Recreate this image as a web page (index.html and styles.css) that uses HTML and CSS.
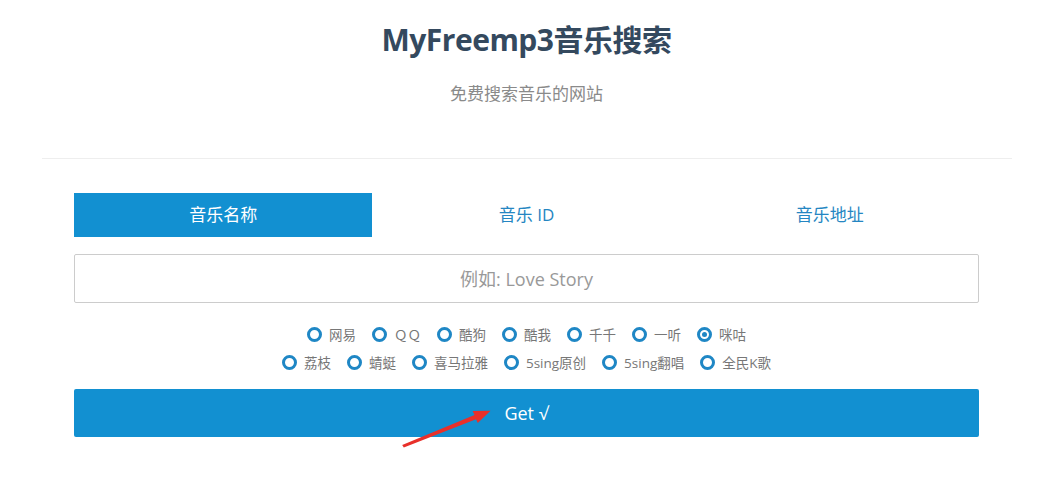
FILE: index.html
```html
<!DOCTYPE html>
<html lang="zh-CN">
<head>
<meta charset="utf-8">
<title>MyFreemp3音乐搜索</title>
<link rel="stylesheet" href="styles.css">
</head>
<body>
<div class="page">
  <header class="header">
    <h1 class="title">MyFreemp3音乐搜索</h1>
    <p class="subtitle">免费搜索音乐的网站</p>
  </header>
  <div class="divider"></div>
  <main class="form">
    <div class="tabs">
      <div class="tab active">音乐名称</div>
      <div class="tab">音乐 ID</div>
      <div class="tab">音乐地址</div>
    </div>
    <div class="search">
      <input class="search-input" type="text" placeholder="例如: Love Story">
    </div>
    <div class="sources">
      <div class="row">
        <label class="opt"><span class="radio"></span>网易</label>
        <label class="opt"><span class="radio"></span>ＱＱ</label>
        <label class="opt"><span class="radio"></span>酷狗</label>
        <label class="opt"><span class="radio"></span>酷我</label>
        <label class="opt"><span class="radio"></span>千千</label>
        <label class="opt"><span class="radio"></span>一听</label>
        <label class="opt"><span class="radio checked"></span>咪咕</label>
      </div>
      <div class="row">
        <label class="opt"><span class="radio"></span>荔枝</label>
        <label class="opt"><span class="radio"></span>蜻蜓</label>
        <label class="opt"><span class="radio"></span>喜马拉雅</label>
        <label class="opt"><span class="radio"></span>5sing原创</label>
        <label class="opt"><span class="radio"></span>5sing翻唱</label>
        <label class="opt"><span class="radio"></span>全民K歌</label>
      </div>
    </div>
    <div class="submit-wrap">
      <button class="submit" type="button">Get √</button>
      <svg class="arrow" width="100" height="50" viewBox="0 0 100 50">
        <polygon points="2.2,44.9 74.5,14.9 72.6,11 90.5,10.8 77.8,23 76,19.2 3.8,47.6" fill="#e8302a"/>
      </svg>
    </div>
  </main>
</div>
</body>
</html>
```
FILE: styles.css
```css
* { box-sizing: border-box; }
html, body { margin: 0; padding: 0; background: #fff; }
body {
  font-family: "Open Sans", "Noto Sans CJK SC", sans-serif;
  color: #333;
}
.page {
  width: 970px;
  margin: 0 auto;
  padding-bottom: 45px;
  position: relative;
  left: -2px;
}
.header { text-align: center; }
.title {
  margin: 23px 0 0;
  font-size: 30px;
  line-height: 34px;
  font-weight: 700;
  letter-spacing: -0.5px;
  color: #34495e;
}
.subtitle {
  margin: 24px 0 0;
  font-size: 17px;
  line-height: 26px;
  color: #8a8a8a;
}
.divider {
  margin-top: 51px;
  border-top: 1px solid #eeeeee;
}
.form {
  width: 905px;
  margin: 34px auto 0;
}
.tabs {
  display: flex;
  gap: 5px;
}
.tab {
  flex: 1;
  height: 44px;
  line-height: 44px;
  text-align: center;
  font-size: 17px;
  color: #2586c2;
}
.tab.active {
  background: #1290d1;
  color: #fff;
}
.search { margin-top: 17px; }
.search-input {
  display: block;
  width: 100%;
  height: 49px;
  border: 1px solid #cccccc;
  border-radius: 2px;
  text-align: center;
  font-family: "Open Sans", "Noto Sans CJK SC", sans-serif;
  font-size: 18px;
  color: #555;
  outline: none;
}
.search-input::placeholder { color: #999; }
.sources { margin-top: 17px; }
.row {
  display: flex;
  justify-content: center;
  align-items: center;
  gap: 16px;
  height: 28px;
}
.opt {
  display: flex;
  align-items: center;
  gap: 7px;
  font-size: 13.5px;
  color: #777;
}
.radio {
  width: 15px;
  height: 15px;
  border: 3px solid #1f87c5;
  border-radius: 50%;
  display: flex;
  align-items: center;
  justify-content: center;
}
.radio.checked::after {
  content: "";
  width: 5px;
  height: 5px;
  border-radius: 50%;
  background: #1f87c5;
}
.submit-wrap {
  margin-top: 13px;
  position: relative;
}
.submit {
  display: block;
  width: 100%;
  height: 48px;
  border: none;
  border-radius: 2px;
  background: #1290d1;
  color: #fff;
  font-family: "Open Sans", "Noto Sans CJK SC", sans-serif;
  font-size: 18px;
  cursor: pointer;
}
.arrow {
  position: absolute;
  left: 326px;
  top: 11px;
}
```
